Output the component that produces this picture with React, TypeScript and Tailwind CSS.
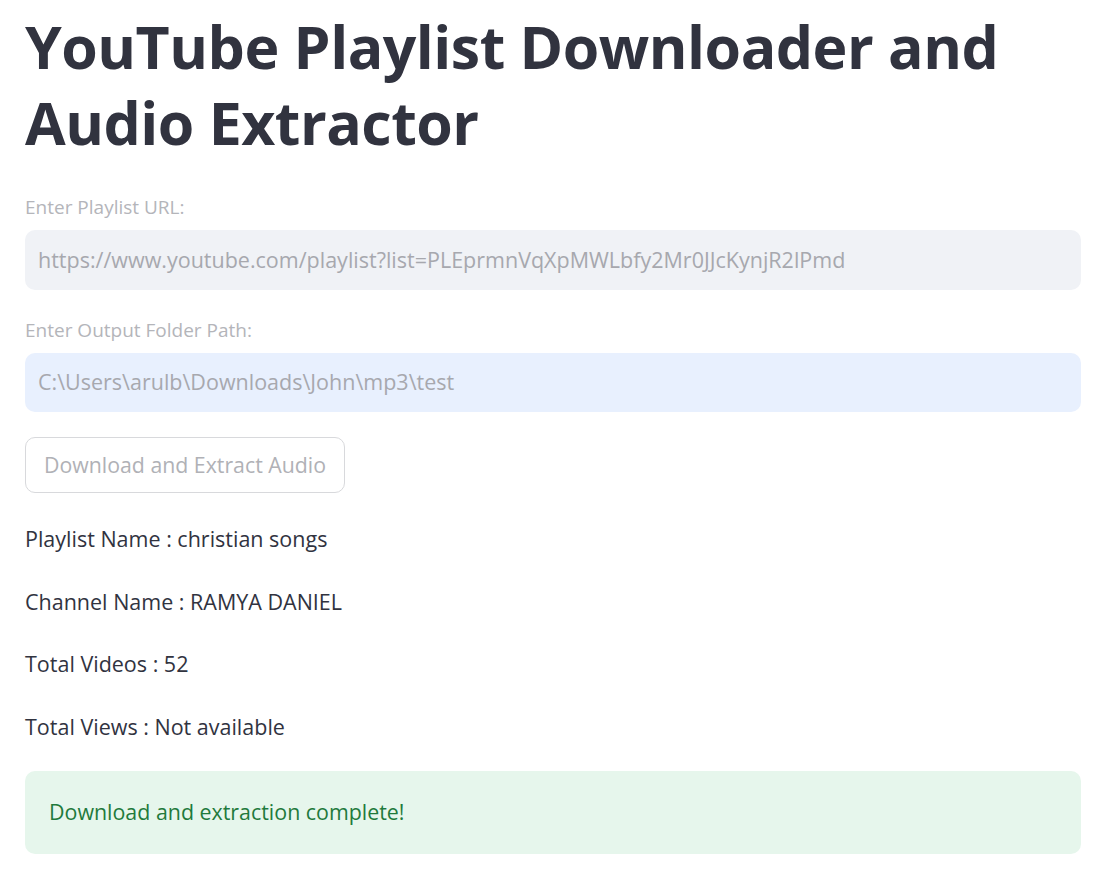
export default function App() {
  return (
    <div
      className="min-h-screen bg-white px-[25px] text-[#31333F]"
      style={{ fontFamily: "'Open Sans', 'Liberation Sans', sans-serif" }}
    >
      <div className="w-[1056px]">
        <h1 className="pt-[8px] text-[59px] font-bold leading-[76px] tracking-[-0.5px]">
          YouTube Playlist Downloader and Audio Extractor
        </h1>

        <div className="mt-[34px]">
          <label className="block text-[19px] leading-[26px] text-[#b4b5ba]">Enter Playlist URL:</label>
          <div className="mt-[10px] flex h-[60px] items-center rounded-[10px] bg-[#f0f2f6] px-[13px] text-[21.5px] text-[#a7a8ae]">
            https://www.youtube.com/playlist?list=PLEprmnVqXpMWLbfy2Mr0JJcKynjR2lPmd
          </div>
        </div>

        <div className="mt-[27px]">
          <label className="block text-[19px] leading-[26px] text-[#b4b5ba]">Enter Output Folder Path:</label>
          <div className="mt-[10px] flex h-[59px] items-center rounded-[10px] bg-[#e8f0fe] px-[13px] text-[21.5px] text-[#a7a8ae]">
            C:\Users\arulb\Downloads\John\mp3\test
          </div>
        </div>

        <button className="mt-[25px] flex h-[56px] w-[320px] items-center justify-center rounded-[10px] border border-[#d8d9dc] bg-white text-[21.3px] text-[#b0b1b6]">
          Download and Extract Audio
        </button>

        <div className="mt-[31px] flex flex-col gap-[32px] text-[21.5px] leading-[30.5px]">
          <p>Playlist Name : christian songs</p>
          <p>Channel Name : RAMYA DANIEL</p>
          <p>Total Videos : 52</p>
          <p>Total Views : Not available</p>
        </div>

        <div className="mt-[29px] flex h-[83px] items-center rounded-[10px] bg-[#e6f6ec] px-[24px] text-[21.4px] text-[#1f7a3c]">
          Download and extraction complete!
        </div>
      </div>
    </div>
  );
}
